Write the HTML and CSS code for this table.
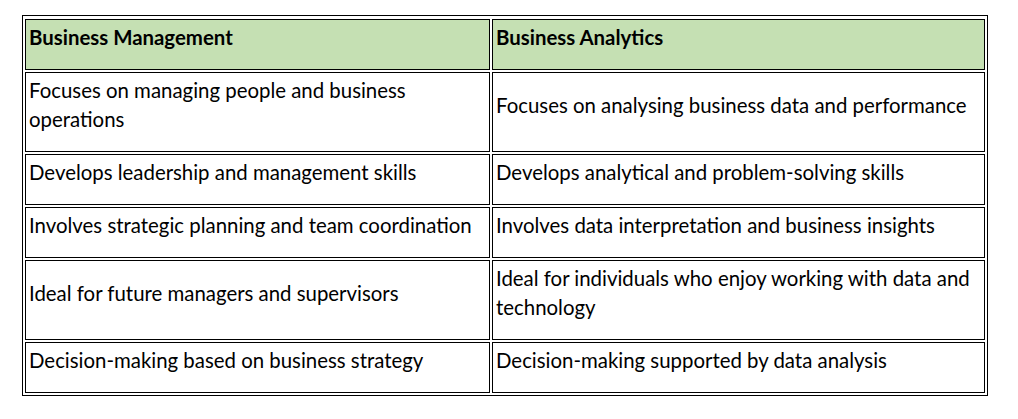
FILE: index.html
```html
<!DOCTYPE html>
<html lang="en">
<head>
<meta charset="utf-8">
<title>Business Management vs Business Analytics</title>
<link rel="stylesheet" href="styles.css">
</head>
<body>
<table class="compare">
  <colgroup>
    <col class="col-a">
    <col class="col-b">
  </colgroup>
  <thead>
    <tr>
      <th><p>Business Management</p></th>
      <th><p>Business Analytics</p></th>
    </tr>
  </thead>
  <tbody>
    <tr>
      <td><p>Focuses on managing people and business<br>operations</p></td>
      <td><p>Focuses on analysing business data and performance</p></td>
    </tr>
    <tr>
      <td><p>Develops leadership and management skills</p></td>
      <td><p>Develops analytical and problem-solving skills</p></td>
    </tr>
    <tr>
      <td><p>Involves strategic planning and team coordination</p></td>
      <td><p>Involves data interpretation and business insights</p></td>
    </tr>
    <tr>
      <td><p>Ideal for future managers and supervisors</p></td>
      <td><p>Ideal for individuals who enjoy working with data and<br>technology</p></td>
    </tr>
    <tr>
      <td><p>Decision-making based on business strategy</p></td>
      <td><p>Decision-making supported by data analysis</p></td>
    </tr>
  </tbody>
</table>
</body>
</html>
```
FILE: styles.css
```css
html, body {
  margin: 0;
  padding: 0;
  background: #ffffff;
}

body {
  font-family: Lato, "Open Sans", sans-serif;
  color: #000000;
}

.compare {
  margin: 15px 0 0 22px;
  width: 966px;
  border: 1px solid #000000;
  border-collapse: separate;
  border-spacing: 2px;
  padding-top: 1px;
  table-layout: fixed;
}

.col-a { width: 465px; }
.col-b { width: 493px; }

.compare th,
.compare td {
  border: 1px solid #000000;
  padding: 3px 2px 0 3px;
  vertical-align: middle;
  text-align: left;
  font-size: 20.4px;
  line-height: 29px;
}

.compare th {
  background: #c5e0b3;
  font-weight: 700;
}

.compare td {
  font-weight: 400;
}

.compare p {
  margin: 0 0 17px;
  white-space: nowrap;
}
```
